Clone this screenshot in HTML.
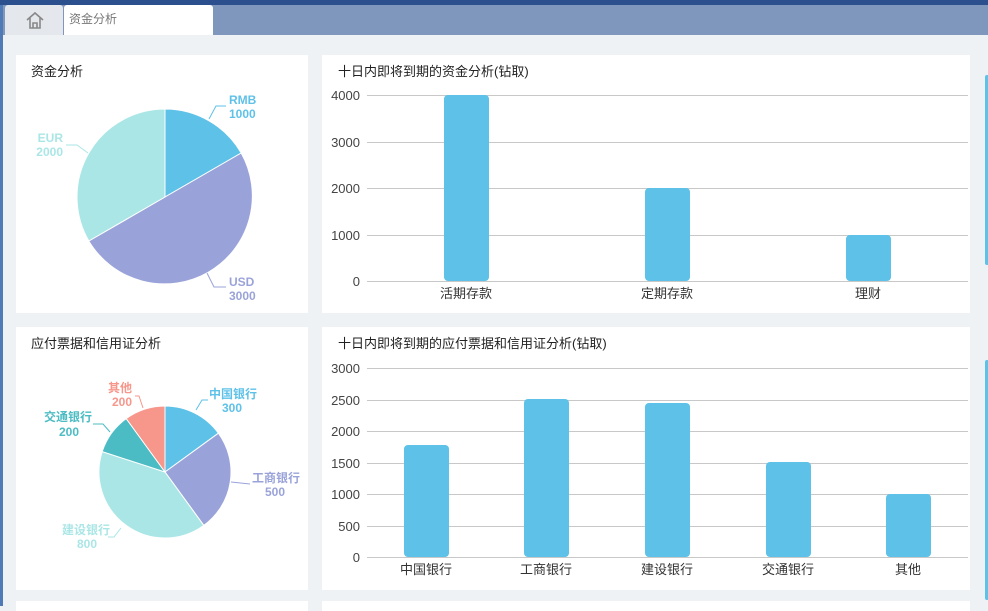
<!DOCTYPE html>
<html><head><meta charset="utf-8"><style>
body{margin:0;width:988px;height:606px;overflow:hidden;background:#eef2f4;font-family:"Liberation Sans","Noto Sans CJK SC",sans-serif;position:relative}
.top{position:absolute;left:0;top:0;width:988px;height:5px;background:#2c4f8e}
.bar{position:absolute;left:0;top:5px;width:988px;height:30px;background:#7f96bd}
.home{position:absolute;left:5px;top:5px;width:58px;height:30px;background:#e4e7ec;border-radius:3px 3px 0 0}
.tab{position:absolute;left:64px;top:5px;width:149px;height:30px;background:#fff;border-radius:3px 3px 0 0;font-size:12px;color:#777;line-height:28px;text-indent:5px}
.p{position:absolute;background:#fff}
.t{position:absolute;font-size:13px;color:#222}
.rb{position:absolute;left:985px;width:4px;background:#5ec1e8;border-radius:3px}
</style></head><body>
<div class="top"></div><div class="bar"></div>
<div style="position:absolute;left:0;top:5px;width:3px;height:601px;background:#4f7ab5"></div>
<div class="home"><svg width="58" height="30"><path d="M22 15 L30 8 L38 15 M25 13 V23 H35 V13 M28 23 V18 H32 V23" fill="none" stroke="#888" stroke-width="1.6"/></svg></div>
<div class="tab">资金分析</div>
<div class="p" style="left:16px;top:55px;width:292px;height:258px"></div>
<div class="p" style="left:322px;top:55px;width:648px;height:258px"></div>
<div class="p" style="left:16px;top:327px;width:292px;height:263px"></div>
<div class="p" style="left:322px;top:327px;width:648px;height:263px"></div>
<div class="p" style="left:16px;top:601px;width:292px;height:10px"></div>
<div class="p" style="left:322px;top:601px;width:648px;height:10px"></div>
<div class="rb" style="top:75px;height:190px"></div>
<div class="rb" style="top:360px;height:240px"></div>
<div class="t" style="left:31px;top:61px">资金分析</div>
<div class="t" style="left:338px;top:61px">十日内即将到期的资金分析(钻取)</div>
<div class="t" style="left:31px;top:333px">应付票据和信用证分析</div>
<div class="t" style="left:338px;top:333px">十日内即将到期的应付票据和信用证分析(钻取)</div>
<svg style="position:absolute;left:0;top:0" width="988" height="606" font-family="Liberation Sans,Noto Sans CJK SC,sans-serif">
<g stroke="#fff" stroke-width="1">
<path d="M165 197 L165 109 A88 88 0 0 1 241.2 153 Z" fill="#5ec1e8"/>
<path d="M165 197 L241.2 153 A88 88 0 0 1 88.8 241 Z" fill="#9aa3d9"/>
<path d="M165 197 L88.8 241 A88 88 0 0 1 165 109 Z" fill="#abe6e6"/>
<path d="M165 472 L165 406 A66 66 0 0 1 218.4 433.2 Z" fill="#5ec1e8"/>
<path d="M165 472 L218.4 433.2 A66 66 0 0 1 203.8 525.4 Z" fill="#9aa3d9"/>
<path d="M165 472 L203.8 525.4 A66 66 0 0 1 102.2 451.6 Z" fill="#abe6e6"/>
<path d="M165 472 L102.2 451.6 A66 66 0 0 1 126.2 418.6 Z" fill="#4bbcc3"/>
<path d="M165 472 L126.2 418.6 A66 66 0 0 1 165 406 Z" fill="#f7968b"/>
</g>
<g fill="none" stroke-width="1">
<path d="M209 119 L216 106 H226" stroke="#5ec1e8"/>
<path d="M207 273 L214 287 H226" stroke="#9aa3d9"/>
<path d="M88 153 L77 145 H66" stroke="#abe6e6"/>
<path d="M196 410 L202 400 H208" stroke="#5ec1e8"/>
<path d="M231 482 L250 484" stroke="#9aa3d9"/>
<path d="M121 528 L114 537 H108" stroke="#abe6e6"/>
<path d="M110 432 L103 424 H93" stroke="#4bbcc3"/>
<path d="M143 408 L139 396 H135" stroke="#f7968b"/>
</g>
<g font-weight="bold" font-size="12">
<text x="229" y="104" fill="#5ec1e8">RMB</text><text x="229" y="118" fill="#5ec1e8">1000</text>
<text x="229" y="286" fill="#9aa3d9">USD</text><text x="229" y="300" fill="#9aa3d9">3000</text>
<text x="63" y="142" fill="#abe6e6" text-anchor="end">EUR</text><text x="63" y="156" fill="#abe6e6" text-anchor="end">2000</text>
<text x="209" y="398" fill="#5ec1e8">中国银行</text><text x="222" y="412" fill="#5ec1e8">300</text>
<text x="252" y="482" fill="#9aa3d9">工商银行</text><text x="265" y="496" fill="#9aa3d9">500</text>
<text x="110" y="534" fill="#abe6e6" text-anchor="end">建设银行</text><text x="97" y="548" fill="#abe6e6" text-anchor="end">800</text>
<text x="92" y="421" fill="#4bbcc3" text-anchor="end">交通银行</text><text x="79" y="436" fill="#4bbcc3" text-anchor="end">200</text>
<text x="132" y="392" fill="#f7968b" text-anchor="end">其他</text><text x="132" y="406" fill="#f7968b" text-anchor="end">200</text>
</g>
<g stroke="#c8c8c8" stroke-width="1">
<path d="M367 95.5H968M367 142.5H968M367 188.5H968M367 235.5H968M367 281.5H968"/>
<path d="M367 368.5H968M367 400.5H968M367 431.5H968M367 463.5H968M367 494.5H968M367 526.5H968M367 557.5H968"/>
</g>
<g fill="#444" font-size="13" text-anchor="end">
<text x="360" y="100">4000</text><text x="360" y="147">3000</text><text x="360" y="193">2000</text><text x="360" y="240">1000</text><text x="360" y="286">0</text>
<text x="360" y="373">3000</text><text x="360" y="405">2500</text><text x="360" y="436">2000</text><text x="360" y="468">1500</text><text x="360" y="499">1000</text><text x="360" y="531">500</text><text x="360" y="562">0</text>
</g>
<g fill="#5ec1e8">
<rect x="444" y="95" width="45" height="186" rx="4"/>
<rect x="645" y="188" width="45" height="93" rx="4"/>
<rect x="846" y="235" width="45" height="46" rx="4"/>
<rect x="404" y="445" width="45" height="112" rx="4"/>
<rect x="524" y="399" width="45" height="158" rx="4"/>
<rect x="645" y="403" width="45" height="154" rx="4"/>
<rect x="766" y="462" width="45" height="95" rx="4"/>
<rect x="886" y="494" width="45" height="63" rx="4"/>
</g>
<g fill="#333" font-size="13" text-anchor="middle">
<text x="466" y="298">活期存款</text><text x="667" y="298">定期存款</text><text x="868" y="298">理财</text>
<text x="426" y="574">中国银行</text><text x="546" y="574">工商银行</text><text x="667" y="574">建设银行</text><text x="788" y="574">交通银行</text><text x="908" y="574">其他</text>
</g>
</svg>
</body></html>
